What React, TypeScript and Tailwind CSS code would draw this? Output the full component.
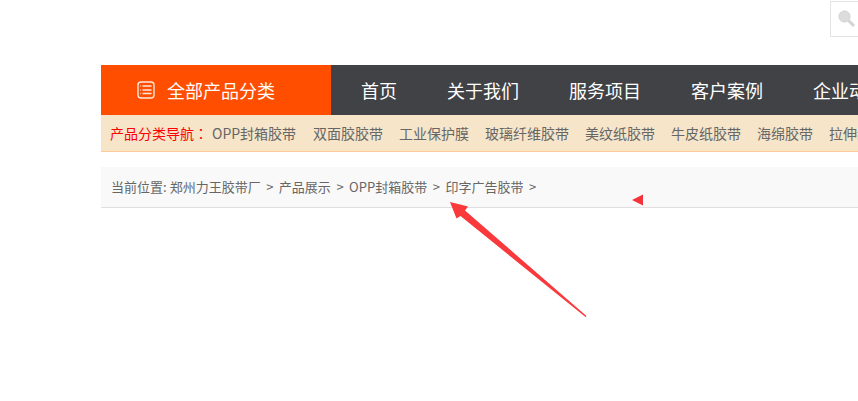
const navItems = ["首页", "关于我们", "服务项目", "客户案例", "企业动态"];
const categories = ["OPP封箱胶带", "双面胶胶带", "工业保护膜", "玻璃纤维胶带", "美纹纸胶带", "牛皮纸胶带", "海绵胶带", "拉伸缠绕膜"];
const crumbs = ["郑州力王胶带厂", "产品展示", "OPP封箱胶带", "印字广告胶带"];

function SearchBox() {
  return (
    <div className="flex h-[37px] justify-end">
      <div className="mt-px flex h-[36px] w-[28px] items-center border border-r-0 border-[#e3e3e3] pl-[6px]">
        <svg width="20" height="20" viewBox="0 0 20 20">
          <circle cx="7.5" cy="7.5" r="5.5" fill="#dcdcdc" stroke="#d0d0d0" />
          <path d="M11.5 11.5 L17 17" stroke="#d4d4d4" strokeWidth="3" />
        </svg>
      </div>
    </div>
  );
}

function ListIcon() {
  return (
    <svg width="18" height="18" viewBox="0 0 18 18" fill="none" stroke="#ffe9dd" strokeWidth="1.4">
      <rect x="1" y="1" width="16" height="16" rx="3" />
      <path d="M5.5 5H14.5M5.5 9H14.5M5.5 12.5H14.5" />
      <path d="M3 5H4.2M3 9H4.2M3 12.5H4.2" strokeOpacity="0.6" />
    </svg>
  );
}

function MainNav() {
  return (
    <div className="mt-[28px] flex h-[50px] bg-[#414246] text-[18px] text-white">
      <div className="flex w-[230px] shrink-0 items-center gap-[12px] bg-[#ff4e00] pl-[36px]">
        <ListIcon />
        <span>全部产品分类</span>
      </div>
      <div className="flex items-center gap-[50px] whitespace-nowrap pl-[30px]">
        {navItems.map((item) => (
          <span key={item}>{item}</span>
        ))}
      </div>
    </div>
  );
}

function CategoryBar() {
  return (
    <div className="flex h-[37px] items-center whitespace-nowrap border-b border-[#ffcc99] bg-[#f6e5c9] pl-[9px] text-[14px] text-[#666666]">
      <span className="w-[102px] shrink-0 text-[#ff0000]">
        产品分类导航<span className="font-['Noto_Sans_CJK_TC']">：</span>
      </span>
      <div className="flex gap-[16px]">
        {categories.map((item) => (
          <span key={item} className="first:w-[85px]">
            {item}
          </span>
        ))}
      </div>
    </div>
  );
}

function Breadcrumb() {
  return (
    <div className="mt-[15px] flex h-[41px] items-center whitespace-nowrap border-b border-[#e0e0e0] bg-[#f9f9f9] pl-[10px] text-[13px] text-[#666666]">
      <span className="mr-[3px]">当前位置:</span>
      {crumbs.map((item) => (
        <span key={item} className="flex">
          <span>{item}</span>
          <span className="mx-[5.5px]">&gt;</span>
        </span>
      ))}
    </div>
  );
}

function Annotations() {
  return (
    <svg className="absolute left-0 top-0" width="858" height="401" viewBox="0 0 858 401">
      <path d="M632 200 L643 194.5 L643 205.5 Z" fill="#f5333a" />
      <path d="M450 202 L468 206.5 L465 210.5 L586.5 316 L585.5 317 L460.5 216 L456.5 218.5 Z" fill="#f9393c" />
    </svg>
  );
}

export default function App() {
  return (
    <div
      className="relative h-[401px] w-[858px] overflow-hidden bg-white"
      style={{ fontFamily: '"Noto Sans CJK SC", "Noto Sans", sans-serif' }}
    >
      <SearchBox />
      <div className="ml-[101px]">
        <MainNav />
        <CategoryBar />
        <Breadcrumb />
      </div>
      <Annotations />
    </div>
  );
}
